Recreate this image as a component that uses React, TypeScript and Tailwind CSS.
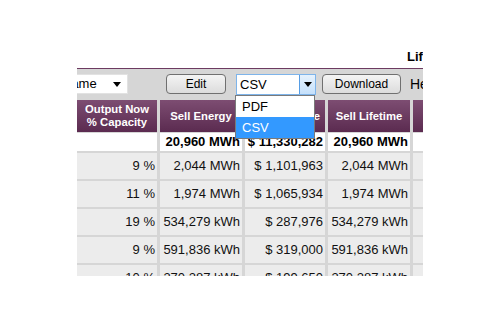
const rows = [
  ["9 %", "2,044 MWh", "$ 1,101,963", "2,044 MWh"],
  ["11 %", "1,974 MWh", "$ 1,065,934", "1,974 MWh"],
  ["19 %", "534,279 kWh", "$ 287,976", "534,279 kWh"],
  ["9 %", "591,836 kWh", "$ 319,000", "591,836 kWh"],
  ["10 %", "370,287 kWh", "$ 199,650", "370,287 kWh"],
];

// 列幅（表示領域左端からの実寸）
const widths = ["w-[80px]", "w-[82px]", "w-[80px]", "w-[82px]", "w-[80px]"];

function Arrow() {
  return (
    <svg width="8" height="5" viewBox="0 0 8 5">
      <polygon points="0,0 8,0 4,5" fill="#000" />
    </svg>
  );
}

function Button({ label, width }: { label: string; width: string }) {
  return (
    <div
      className={`${width} h-[20px] flex items-center justify-center rounded-[4px] border border-[#707070] bg-gradient-to-b from-[#f4f4f4] to-[#dcdcdc] text-[12px] text-black`}
    >
      {label}
    </div>
  );
}

function HeaderCell({ width, children }: { width: string; children?: React.ReactNode }) {
  return (
    <div
      className={`${width} shrink-0 flex items-center justify-center text-center bg-gradient-to-b from-[#7d4d72] to-[#5b2b50] text-white font-bold text-[11.3px] leading-[13px]`}
    >
      {children}
    </div>
  );
}

export default function App() {
  return (
    <div className="w-[500px] h-[327px] bg-white font-['Liberation_Sans',Arial,sans-serif]">
      <div className="ml-[77px] pt-[45px]">
        <div className="w-[346px] h-[231px] overflow-hidden">
          <div className="w-[520px]">
            {/* 見出し */}
            <div className="h-[23px] pt-[4px] pl-[330px] text-[13px] leading-[15px] font-bold text-black whitespace-nowrap">
              Lifetime Totals
            </div>

            <div className="border-t border-[#6d3b61] bg-[#d6d6d6]">
              {/* ツールバー */}
              <div className="h-[31px] pt-[5px] flex items-start">
                <div className="ml-[-20px] w-[71px] h-[20px] flex items-center justify-between pl-[4px] pr-[6px] bg-white border border-[#e2e2e2] text-[13px] text-black">
                  <span>Name</span>
                  <Arrow />
                </div>
                <div className="ml-[38px]">
                  <Button label="Edit" width="w-[60px]" />
                </div>
                <div className="ml-[10px] relative w-[80px] h-[21px] flex bg-white border border-[#7eb4ea] text-[13px] text-black">
                  <span className="flex-1 pl-[3px] leading-[19px]">CSV</span>
                  <div className="w-[16px] flex items-center justify-center border-l border-[#569de5] bg-gradient-to-b from-[#e6f2fd] to-[#c5e0fb]">
                    <Arrow />
                  </div>
                  {/* 開いているリスト */}
                  <div className="absolute z-10 left-[-2px] top-[20px] w-[80px] border border-[#7a7a7a] bg-white text-[13px]">
                    <div className="h-[21px] pl-[6px] leading-[21px] text-black">PDF</div>
                    <div className="h-[21px] pl-[6px] leading-[21px] bg-[#3399ff] text-white">CSV</div>
                  </div>
                </div>
                <div className="ml-[6px]">
                  <Button label="Download" width="w-[79px]" />
                </div>
                <div className="ml-[9px] text-[14px] leading-[20px] text-black whitespace-nowrap">Help</div>
              </div>

              {/* 明細テーブル */}
              <div className="flex gap-[3px] h-[32px]">
                <HeaderCell width={widths[0]}>
                  Output Now
                  <br />% Capacity
                </HeaderCell>
                <HeaderCell width={widths[1]}>Sell Energy</HeaderCell>
                <HeaderCell width={widths[2]}>Sell Revenue</HeaderCell>
                <HeaderCell width={widths[3]}>Sell Lifetime</HeaderCell>
                <HeaderCell width={widths[4]} />
              </div>

              <div className="mt-[1px] flex gap-[3px] h-[18px] text-[13px] font-bold text-black">
                {["", "20,960 MWh", "$ 11,330,282", "20,960 MWh", ""].map((v, i) => (
                  <div
                    key={i}
                    className={`${widths[i]} shrink-0 bg-white flex items-center justify-end pr-[2px] whitespace-nowrap`}
                  >
                    {v}
                  </div>
                ))}
              </div>

              <div className="mt-[2px] flex flex-col gap-[2px]">
                {rows.map((r, ri) => (
                  <div key={ri} className="flex gap-[3px] h-[26px] text-[13px] text-[#111]">
                    {[...r, ""].map((v, i) => (
                      <div
                        key={i}
                        className={`${widths[i]} shrink-0 bg-[#ececec] flex items-center justify-end pr-[2px] whitespace-nowrap`}
                      >
                        {v}
                      </div>
                    ))}
                  </div>
                ))}
              </div>
            </div>
          </div>
        </div>
      </div>
    </div>
  );
}
